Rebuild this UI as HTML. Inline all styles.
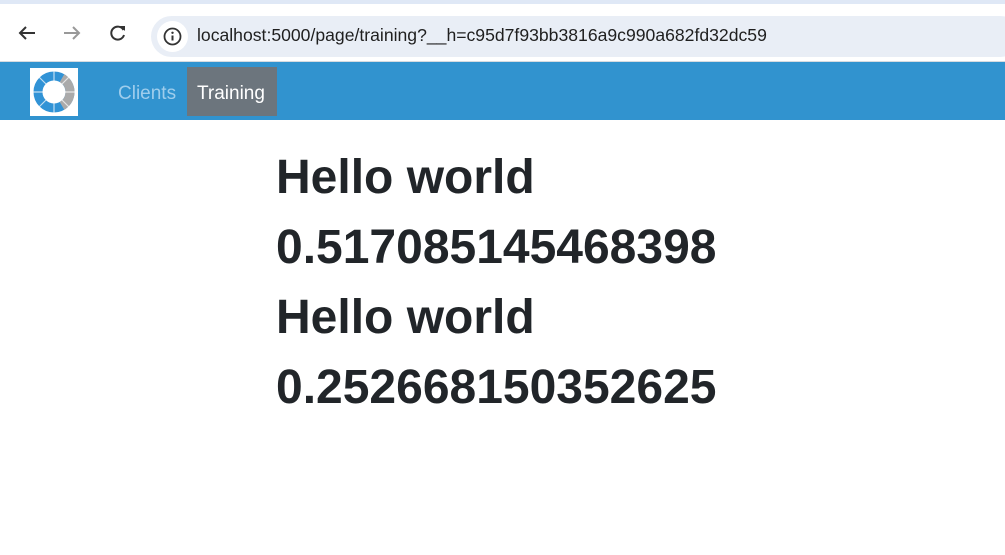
<!DOCTYPE html>
<html><head><meta charset="utf-8"><style>
*{margin:0;padding:0;box-sizing:border-box}
body{width:1005px;height:555px;overflow:hidden;background:#fff;font-family:"Liberation Sans",sans-serif;position:relative}
.top{position:absolute;left:0;top:0;width:1005px;height:61px;background:#fff;border-top:4px solid #dfe8f6}
.pill{position:absolute;left:151px;top:12px;width:870px;height:41px;border-radius:21px;background:#e9eef6}
.info{position:absolute;left:157px;top:17px;width:31px;height:31px;border-radius:50%;background:#fff}
.url{position:absolute;left:197px;top:21px;font-size:17.6px;color:#1f1f1f}
.nav{position:absolute;left:0;top:61px;width:1005px;height:59px;background:#3193cf;border-top:1px solid #d6dbe0}
.logo{position:absolute;left:30px;top:6px;width:48px;height:48px;background:#fff}
.clients{position:absolute;left:118px;top:21px;font-size:19px;color:#9fcdec}
.train{position:absolute;left:187px;top:5px;width:90px;height:49px;background:#6c757d;color:#fff;font-size:19px;padding:16px 0 0 10px}
h1{position:absolute;left:276px;font-size:48px;font-weight:bold;color:#212529;line-height:1}
</style></head><body>
<div class="top">
<svg style="position:absolute;left:16px;top:20px" width="22" height="18" viewBox="0 0 22 18"><path d="M19 9H4M10 3L4 9l6 6" stroke="#333" stroke-width="2" fill="none"/></svg>
<svg style="position:absolute;left:61px;top:20px" width="22" height="18" viewBox="0 0 22 18"><path d="M3 9h15M12 3l6 6-6 6" stroke="#999" stroke-width="2" fill="none"/></svg>
<svg style="position:absolute;left:108px;top:19px" width="20" height="20" viewBox="0 0 20 20"><path d="M15.5 7A6.5 6.5 0 1 0 16 12" stroke="#333" stroke-width="2" fill="none"/><path d="M12 3h5v5z" fill="#333"/></svg>
<div class="pill"></div><div class="info"></div>
<svg style="position:absolute;left:163px;top:23px" width="19" height="19" viewBox="0 0 19 19"><circle cx="9.5" cy="9.5" r="8" stroke="#333" stroke-width="1.8" fill="none"/><path d="M9.5 8.5v5" stroke="#333" stroke-width="2"/><circle cx="9.5" cy="5.8" r="1.2" fill="#333"/></svg>
<div class="url">localhost:5000/page/training?__h=c95d7f93bb3816a9c990a682fd32dc59</div>
</div>
<div class="nav">
<div class="logo"><svg width="48" height="48" viewBox="0 0 48 48">
<circle cx="24" cy="24" r="16" fill="none" stroke="#3193d6" stroke-width="9"/>
<path d="M32 10.14A16 16 0 0 1 32 37.86" fill="none" stroke="#aaa" stroke-width="9"/>
<g stroke="#fff" stroke-width="1.2" opacity=".7"><path d="M24 3v11M24 34v11M3 24h11M34 24h11M9 9l7.5 7.5M31.5 31.5l7.5 7.5M39 9l-7.5 7.5M16.5 31.5L9 39"/></g>
</svg></div>
<div class="clients">Clients</div>
<div class="train">Training</div>
</div>
<h1 style="top:154px">Hello world</h1>
<h1 style="top:224px">0.517085145468398</h1>
<h1 style="top:294px">Hello world</h1>
<h1 style="top:364px">0.252668150352625</h1>
</body></html>
